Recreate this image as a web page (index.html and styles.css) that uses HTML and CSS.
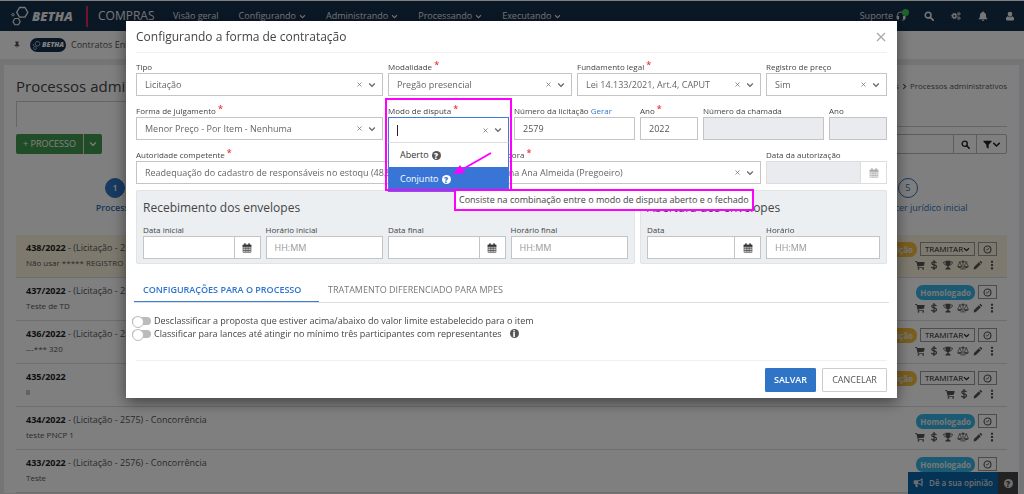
FILE: index.html
```html
<!DOCTYPE html>
<html lang="pt-BR">
<head>
<meta charset="utf-8">
<meta name="viewport" content="width=device-width, initial-scale=1">
<title>Compras - Processos administrativos</title>
<link rel="stylesheet" href="styles.css">
</head>
<body>
<svg class="sprite" aria-hidden="true">
  <symbol id="i-down" viewBox="0 0 10 10"><path d="M1.5 3.2 5 6.7 8.5 3.2" fill="none" stroke="currentColor" stroke-width="1.6"/></symbol>
  <symbol id="i-x" viewBox="0 0 10 10"><path d="M1 1 9 9M9 1 1 9" fill="none" stroke="currentColor" stroke-width="1.4"/></symbol>
  <symbol id="i-search" viewBox="0 0 16 16"><circle cx="6.6" cy="6.6" r="4.6" fill="none" stroke="currentColor" stroke-width="2.4"/><path d="m10 10 4.6 4.6" stroke="currentColor" stroke-width="2.8" stroke-linecap="round"/></symbol>
  <symbol id="i-gears" viewBox="0 0 18 16"><g fill="none" stroke="currentColor"><circle cx="6" cy="8" r="3.1" stroke-width="2.4"/><circle cx="6" cy="8" r="5" stroke-width="1.8" stroke-dasharray="2 1.93"/><circle cx="14" cy="4" r="1.7" stroke-width="1.5"/><circle cx="14" cy="4" r="2.9" stroke-width="1.2" stroke-dasharray="1.5 1.53"/><circle cx="14" cy="12" r="1.7" stroke-width="1.5"/><circle cx="14" cy="12" r="2.9" stroke-width="1.2" stroke-dasharray="1.5 1.53"/></g></symbol>
  <symbol id="i-bell" viewBox="0 0 16 16"><path fill="currentColor" d="M8 .5c.7 0 1.100.5 1.100 1.100v.5C11.500 2.600 12.800 4.500 12.800 7c0 3 .9 4.300 2.200 5.500v.8H1v-.8C2.300 11.300 3.200 10 3.200 7c0-2.500 1.300-4.400 3.700-4.900v-.5C6.900 1 7.300.5 8 .5zM6 14h4c0 1-.9 1.800-2 1.800S6 15 6 14z"/></symbol>
  <symbol id="i-user" viewBox="0 0 16 16"><path fill="currentColor" d="M8 1a3.700 3.700 0 0 1 3.700 3.800C11.700 7 10.100 9 8 9S4.300 7 4.300 4.800A3.700 3.700 0 0 1 8 1zM4.500 8.200C5.400 9.300 6.600 10 8 10s2.600-.7 3.500-1.800c2.300.4 3 2.800 3 5 0 1.100-.8 1.800-1.900 1.800H3.400c-1.100 0-1.900-.7-1.900-1.800 0-2.200.7-4.600 3-5z"/></symbol>
  <symbol id="i-headset" viewBox="0 0 16 16"><path d="M2 9V7.500a6 6 0 0 1 12 0V12c0 1.800-1.300 2.600-4 2.600" fill="none" stroke="currentColor" stroke-width="1.400"/><path fill="currentColor" d="M1 8h3.700v5.500H3A2 2 0 0 1 1 11.500zM15 8h-3.700v5.500H13a2 2 0 0 0 2-2z"/></symbol>
  <symbol id="i-pin" viewBox="0 0 12 16"><path fill="currentColor" d="M2.500 1h7v2h-1v4C10 7.700 11 9 11 10.500H6.700L6 15.500l-.7-5H1C1 9 2 7.700 3.500 7V3h-1z"/></symbol>
  <symbol id="i-filter" viewBox="0 0 12 12"><path fill="currentColor" d="M.5 1h11v1L7.500 6.300v5.200l-3-2V6.300L.5 2z"/></symbol>
  <symbol id="i-cart" viewBox="0 0 16 16"><path fill="currentColor" d="M0 1.500h3.200L3.700 3H15.500L14.300 9 5.500 10l.2 1.100h8.600v1.300H4.500L2.200 2.900H0z"/><circle cx="5.600" cy="14" r="1.400" fill="currentColor"/><circle cx="13" cy="14" r="1.400" fill="currentColor"/></symbol>
  <symbol id="i-dollar" viewBox="0 0 16 16"><path d="M12 4.800C11 3.500 9.700 3 8 3 5.900 3 4.500 4 4.500 5.500 4.500 9 12 6.800 12 10.600 12 12.200 10.300 13 8 13c-1.900 0-3.300-.6-4.300-2M8 0v16" fill="none" stroke="currentColor" stroke-width="1.900"/></symbol>
  <symbol id="i-trophy" viewBox="0 0 16 16"><path fill="currentColor" d="M4 1h8v2c0 4-1 6-3 7v2c1.500 0 3 .8 3 2.500v.5H4v-.5C4 12.800 5.500 12 7 12v-2C5 9 4 7 4 3z"/><path d="M4 3.200H1c0 3 1.500 4.800 4.500 5M12 3.200h3c0 3-1.500 4.800-4.500 5" fill="none" stroke="currentColor" stroke-width="1.300"/></symbol>
  <symbol id="i-scale" viewBox="0 0 20 16"><g fill="none" stroke="currentColor" stroke-width="1.200"><path d="M10 1v13M3 2.800h14M5.500 14.500h9M4.500 3 1.300 10M4.500 3l3.200 7M15.500 3l-3.200 7M15.500 3l3.200 7"/></g><path fill="currentColor" d="M.5 10h8c0 1.800-1.600 2.800-4 2.800S.5 11.800.5 10zM11.500 10h8c0 1.800-1.600 2.800-4 2.800s-4-1-4-2.800z"/><circle cx="10" cy="2.200" r="1.500" fill="currentColor"/></symbol>
  <symbol id="i-pencil" viewBox="0 0 16 16"><path fill="currentColor" d="m11.900 1 3.100 3.100-1.700 1.700-3.100-3.100zM9.400 3.500l3.100 3.100-7.800 7.800L1 15l.6-3.700z"/></symbol>
  <symbol id="i-dots" viewBox="0 0 16 16"><path fill="currentColor" d="M6.300 1h3.400v3.400H6.300zM6.300 6.300h3.400v3.400H6.300zM6.300 11.600h3.400V15H6.300z"/></symbol>
  <symbol id="i-clock" viewBox="0 0 12 12"><circle cx="6" cy="6" r="4.600" fill="none" stroke="currentColor" stroke-width="1.500"/><path d="M8 3.800 6.300 6.400H4" fill="none" stroke="currentColor" stroke-width="1.100"/></symbol>
  <symbol id="i-cal" viewBox="0 0 14 14"><path d="M1.500 3h11v10h-11zM1.500 5.500h11M4.500 5.500V13M7 5.500V13M9.500 5.500V13M1.500 8h11M1.500 10.500h11" fill="none" stroke="currentColor" stroke-width=".9"/><path fill="currentColor" d="M1 2.500h12v2.800H1zM3.200.5h1.900v3H3.200zM8.900.5h1.900v3H8.900z"/></symbol>
  <symbol id="i-horn" viewBox="0 0 16 14"><path d="M2.500 4h4.500c2.500 0 4.500-1.200 6-2.800v9.200C11.500 9 9.500 7.800 7 7.800" fill="none" stroke="currentColor" stroke-width="1.500"/><path fill="currentColor" d="M1 3.500h6.500v4.800H6c.2 1.800.9 2.800 1.600 4L4.500 13C3.700 11.500 3.200 10 3.300 8.300H1zM13 4.500a1.500 1.500 0 0 1 0 3z"/></symbol>
  <symbol id="i-hex" viewBox="0 0 18 20"><g fill="none" stroke="currentColor" stroke-linejoin="round"><path d="M8.500 1.500h5.500l2.800 4.800-2.800 4.800H8.500L5.700 6.300z" stroke-width="1.300"/><path d="M3.800 12.500h3.600l1.800 3.100-1.800 3.100H3.800L2 15.600z" stroke-width="1.100"/><circle cx="2" cy="8.700" r="1.200" stroke-width=".9"/></g></symbol>
</svg>

<div class="page">
  <header class="nav">
    <a class="brand" href="#"><svg class="brand-mark"><use href="#i-hex"/></svg><b>BETHA</b></a>
    <span class="product">COMPRAS</span>
    <nav class="menu">
      <a href="#">Visão geral</a>
      <a href="#">Configurando <svg class="caret"><use href="#i-down"/></svg></a>
      <a href="#">Administrando <svg class="caret"><use href="#i-down"/></svg></a>
      <a href="#">Processando <svg class="caret"><use href="#i-down"/></svg></a>
      <a href="#">Executando <svg class="caret"><use href="#i-down"/></svg></a>
    </nav>
    <div class="tools">
      <a class="support" href="#">Suporte <svg><use href="#i-headset"/></svg><i class="online"></i></a>
      <button aria-label="Pesquisar"><svg><use href="#i-search"/></svg></button>
      <button aria-label="Configurações"><svg><use href="#i-gears"/></svg></button>
      <button aria-label="Notificações"><svg><use href="#i-bell"/></svg></button>
      <button aria-label="Usuário"><svg><use href="#i-user"/></svg></button>
    </div>
  </header>
  <div class="context">
    <svg class="pin"><use href="#i-pin"/></svg>
    <span class="pill"><svg><use href="#i-hex"/></svg><b>BETHA</b></span>
    <span>Contratos Entidade</span>
  </div>

  <main class="panel">
    <div class="heading">
      <h1>Processos administrativos</h1>
      <div class="crumbs">Processos <svg><use href="#i-down"/></svg> Processos administrativos</div>
    </div>
    <div class="tabline"><div class="tabbox"></div></div>
    <div class="actions">
      <div class="split"><button>+ PROCESSO</button><button aria-label="Mais opções"><svg><use href="#i-down"/></svg></button></div>
      <div class="find"><input type="text" aria-label="Pesquisar processos"><button aria-label="Pesquisar"><svg><use href="#i-search"/></svg></button><button aria-label="Filtrar"><svg><use href="#i-filter"/></svg><svg><use href="#i-down"/></svg></button></div>
    </div>
    <ol class="steps">
      <li class="current"><i>1</i>Processo</li>
      <li><i>2</i></li>
      <li><i>3</i></li>
      <li><i>4</i></li>
      <li><i>5</i>Emitir parecer jurídico inicial</li>
    </ol>
    <ul class="rows">
      <li class="picked">
        <div><p><b>438/2022</b> - (Licitação - 2579)</p><small>Não usar ***** REGISTRO</small></div>
        <div class="side">
          <div class="state"><span class="tag amber">Em edição</span><button class="flow">TRAMITAR<svg><use href="#i-down"/></svg></button><button class="clock" aria-label="Histórico"><svg><use href="#i-clock"/></svg></button></div>
          <div class="icons"><svg><use href="#i-cart"/></svg><svg><use href="#i-dollar"/></svg><svg><use href="#i-trophy"/></svg><svg class="wide"><use href="#i-scale"/></svg><svg><use href="#i-pencil"/></svg><svg><use href="#i-dots"/></svg></div>
        </div>
      </li>
      <li>
        <div><p><b>437/2022</b> - (Licitação - 2578)</p><small>Teste de TD</small></div>
        <div class="side">
          <div class="state"><span class="tag blue">Homologado</span><button class="clock" aria-label="Histórico"><svg><use href="#i-clock"/></svg></button></div>
          <div class="icons"><svg><use href="#i-cart"/></svg><svg><use href="#i-dollar"/></svg><svg><use href="#i-trophy"/></svg><svg class="wide"><use href="#i-scale"/></svg><svg><use href="#i-pencil"/></svg><svg><use href="#i-dots"/></svg></div>
        </div>
      </li>
      <li>
        <div><p><b>436/2022</b> - (Licitação - 2577)</p><small>---*** 320</small></div>
        <div class="side">
          <div class="state"><span class="tag amber">Em edição</span><button class="flow">TRAMITAR<svg><use href="#i-down"/></svg></button><button class="clock" aria-label="Histórico"><svg><use href="#i-clock"/></svg></button></div>
          <div class="icons"><svg><use href="#i-cart"/></svg><svg><use href="#i-dollar"/></svg><svg><use href="#i-trophy"/></svg><svg class="wide"><use href="#i-scale"/></svg><svg><use href="#i-pencil"/></svg><svg><use href="#i-dots"/></svg></div>
        </div>
      </li>
      <li>
        <div><p><b>435/2022</b></p><small>ll</small></div>
        <div class="side">
          <div class="state"><span class="tag amber">Em edição</span><button class="flow">TRAMITAR<svg><use href="#i-down"/></svg></button><button class="clock" aria-label="Histórico"><svg><use href="#i-clock"/></svg></button></div>
          <div class="icons"><svg><use href="#i-cart"/></svg><svg><use href="#i-dollar"/></svg><svg><use href="#i-pencil"/></svg><svg><use href="#i-dots"/></svg></div>
        </div>
      </li>
      <li>
        <div><p><b>434/2022</b> - (Licitação - 2575) - Concorrência</p><small>teste PNCP 1</small></div>
        <div class="side">
          <div class="state"><span class="tag blue">Homologado</span><button class="clock" aria-label="Histórico"><svg><use href="#i-clock"/></svg></button></div>
          <div class="icons"><svg><use href="#i-cart"/></svg><svg><use href="#i-dollar"/></svg><svg><use href="#i-trophy"/></svg><svg class="wide"><use href="#i-scale"/></svg><svg><use href="#i-pencil"/></svg><svg><use href="#i-dots"/></svg></div>
        </div>
      </li>
      <li>
        <div><p><b>433/2022</b> - (Licitação - 2576) - Concorrência</p><small>Teste</small></div>
        <div class="side">
          <div class="state"><span class="tag blue">Homologado</span><button class="clock" aria-label="Histórico"><svg><use href="#i-clock"/></svg></button></div>
        </div>
      </li>
    </ul>
  </main>
  <div class="feedback"><button><svg><use href="#i-horn"/></svg>Dê a sua opinião</button><button aria-label="Ajuda"><i class="dot">?</i></button></div>
</div>

<div class="overlay">
  <form class="modal" role="dialog" aria-labelledby="dlg-title">
    <div class="modal-head"><h2 id="dlg-title">Configurando a forma de contratação</h2><button type="button" class="close" aria-label="Fechar"><svg><use href="#i-x"/></svg></button></div>

    <div class="grid">
      <div class="field s4"><label for="tipo">Tipo</label><div class="combo"><input id="tipo" value="Licitação"><svg class="x"><use href="#i-x"/></svg><svg><use href="#i-down"/></svg></div></div>
      <div class="field s3"><label for="modalidade">Modalidade <em>*</em></label><div class="combo"><input id="modalidade" value="Pregão presencial"><svg class="x"><use href="#i-x"/></svg><svg><use href="#i-down"/></svg></div></div>
      <div class="field s3"><label for="fundamento">Fundamento legal <em>*</em></label><div class="combo"><input id="fundamento" value="Lei 14.133/2021, Art.4, CAPUT"><svg class="x"><use href="#i-x"/></svg><svg><use href="#i-down"/></svg></div></div>
      <div class="field s2"><label for="registro">Registro de preço</label><div class="combo"><input id="registro" value="Sim"><svg class="x"><use href="#i-x"/></svg><svg><use href="#i-down"/></svg></div></div>

      <div class="field s4"><label for="forma">Forma de julgamento <em>*</em></label><div class="combo"><input id="forma" value="Menor Preço - Por Item - Nenhuma"><svg class="x"><use href="#i-x"/></svg><svg><use href="#i-down"/></svg></div></div>
      <div class="field s2 open">
        <label for="modo">Modo de disputa <em>*</em></label>
        <div class="combo"><i class="cursor"></i><input id="modo" value=""><svg class="x"><use href="#i-x"/></svg><svg><use href="#i-down"/></svg></div>
        <ul class="options" role="listbox" aria-label="Modo de disputa">
          <li role="option">Aberto <i class="dot">?</i></li>
          <li role="option" class="on" aria-selected="true">Conjunto <i class="dot">?</i></li>
        </ul>
        <div class="marker"></div>
        <svg class="arrow" viewBox="0 0 40 24"><path d="M39 1 11 17" stroke="#ff00ff" stroke-width="2" fill="none"/><path d="M1 22 8 13l5 8z" fill="#ff00ff"/></svg>
        <div class="tip" role="tooltip">Consiste na combinação entre o modo de disputa aberto e o fechado</div>
      </div>
      <div class="field s2"><label for="numero">Número da licitação <a href="#">Gerar</a></label><input class="box" id="numero" value="2579"></div>
      <div class="field s1"><label for="ano">Ano <em>*</em></label><input class="box" id="ano" value="2022"></div>
      <div class="field s2"><label for="chamada">Número da chamada</label><input class="box" id="chamada" disabled></div>
      <div class="field s1"><label for="ano2">Ano</label><input class="box" id="ano2" disabled></div>

      <div class="field s5"><label for="autoridade">Autoridade competente <em>*</em></label><div class="combo"><input id="autoridade" value="Readequação do cadastro de responsáveis no estoqu (482.2"><svg class="x"><use href="#i-x"/></svg><svg><use href="#i-down"/></svg></div></div>
      <div class="field s5"><label for="comissao">Comissão julgadora <em>*</em></label><div class="combo"><input id="comissao" value="Comissão Ana Ana Almeida (Pregoeiro)"><svg class="x"><use href="#i-x"/></svg><svg><use href="#i-down"/></svg></div></div>
      <div class="field s2"><label for="autorizacao">Data da autorização</label><div class="date off"><input id="autorizacao" disabled><button type="button" disabled aria-label="Abrir calendário"><svg><use href="#i-cal"/></svg></button></div></div>
    </div>

    <div class="groups">
      <fieldset class="two">
        <h3>Recebimento dos envelopes</h3>
        <div class="field"><label for="di">Data inicial</label><div class="date"><input id="di"><button type="button" aria-label="Abrir calendário"><svg><use href="#i-cal"/></svg></button></div></div>
        <div class="field"><label for="hi">Horário inicial</label><input class="box" id="hi" placeholder="HH:MM"></div>
        <div class="field"><label for="df">Data final</label><div class="date"><input id="df"><button type="button" aria-label="Abrir calendário"><svg><use href="#i-cal"/></svg></button></div></div>
        <div class="field"><label for="hf">Horário final</label><input class="box" id="hf" placeholder="HH:MM"></div>
      </fieldset>
      <fieldset>
        <h3>Abertura dos envelopes</h3>
        <div class="field"><label for="da">Data</label><div class="date"><input id="da"><button type="button" aria-label="Abrir calendário"><svg><use href="#i-cal"/></svg></button></div></div>
        <div class="field"><label for="ha">Horário</label><input class="box" id="ha" placeholder="HH:MM"></div>
      </fieldset>
    </div>

    <div class="tabs" role="tablist">
      <button type="button" role="tab" aria-selected="true" class="on">CONFIGURAÇÕES PARA O PROCESSO</button>
      <button type="button" role="tab" aria-selected="false">TRATAMENTO DIFERENCIADO PARA MPES</button>
    </div>
    <div class="switches">
      <label><input type="checkbox">Desclassificar a proposta que estiver acima/abaixo do valor limite estabelecido para o item</label>
      <label><input type="checkbox">Classificar para lances até atingir no mínimo três participantes com representantes <i class="dot info">i</i></label>
    </div>
    <div class="modal-foot"><button type="button" class="primary">SALVAR</button><button type="button">CANCELAR</button></div>
  </form>
</div>
</body>
</html>
```

FILE: styles.css
```css
* { box-sizing: border-box; }
html, body { height: 100%; }
body {
  margin: 0;
  font: 9px/12px "Open Sans", "Noto Sans", sans-serif;
  color: #555;
  background: #e6ebee;
}
button, input { font: inherit; color: inherit; border-radius: 0; }
button { padding: 0; border: 0; background: none; }
a { color: inherit; text-decoration: none; }
h1, h2, h3, p, ul, ol { margin: 0; padding: 0; font-weight: 400; list-style: none; }
i, em { font-style: normal; }
svg { display: block; flex: none; }
.sprite { position: absolute; width: 0; height: 0; }

/* Top bar */
.nav {
  display: flex;
  align-items: center;
  height: 31px;
  padding: 0 9px 0 11px;
  border-top: 1px solid #fff;
  background: #15304d;
  color: #eee;
}
.brand { display: flex; align-items: center; width: 77px; height: 21px; border-right: 2px solid #e0284f; }
.brand-mark { width: 18px; height: 20px; }
.brand b, .pill b { font-style: italic; font-weight: 800; }
.brand b { margin-left: 3px; font-size: 13px; }
.product { width: 75px; padding-left: 10px; font-size: 12px; }
.menu { display: flex; gap: 20px; padding-left: 10px; }
.menu a { display: flex; align-items: center; gap: 3px; }
.caret { width: 7px; height: 7px; }
.tools { display: flex; align-items: center; gap: 17px; margin-left: auto; }
.tools svg { width: 10px; height: 10px; }
.tools button { width: 10px; }
.support { position: relative; display: flex; align-items: center; gap: 3px; margin-right: 1px; }
.online { position: absolute; right: -3px; top: -1px; width: 7px; height: 7px; border-radius: 50%; background: #3ec553; }
.context {
  display: flex;
  align-items: center;
  height: 28px;
  padding-left: 14px;
  background: #fff;
}
.pin { width: 6px; height: 8px; margin-right: 10px; }
.pill { display: flex; align-items: center; justify-content: center; gap: 1px; width: 36px; height: 14px; margin-right: 5px; border-radius: 7px; background: #15304d; color: #fff; font-size: 7px; }
.pill svg { width: 9px; height: 9px; }

/* Page panel */
.panel { margin: 6px 5px 0 4px; padding: 12px 12px 0; background: #fff; }
.heading { display: flex; align-items: center; justify-content: space-between; height: 18px; }
h1 { font-size: 15px; line-height: 18px; color: #444; }
.crumbs { display: flex; align-items: center; gap: 2px; font-size: 8px; }
.crumbs svg { width: 7px; height: 7px; transform: rotate(-90deg); }
.tabline { height: 26px; margin-top: 6px; border-bottom: 1px solid #ccc; }
.tabbox { width: 220px; height: 26px; border: 1px solid #ccc; border-bottom: 0; background: #fff; }
.actions { display: flex; justify-content: space-between; margin-top: 7px; }
.split { display: flex; height: 20px; border-radius: 2px; background: #419a4f; color: #fff; }
.split button:first-child { width: 68px; border-right: 1px solid #ddd; }
.split button:last-child { display: grid; place-items: center; width: 18px; }
.split svg { width: 8px; height: 8px; }
.find { display: flex; width: 340px; height: 20px; border: 1px solid #bbb; border-radius: 2px; color: #222; }
.find input { flex: 1; border: 0; background: none; }
.find button { display: flex; align-items: center; justify-content: center; width: 23px; border-left: 1px solid #bbb; }
.find button:last-child { width: 30px; }
.find svg { width: 9px; height: 9px; }
.steps { display: grid; grid-template-columns: repeat(5, 1fr); margin-top: 24px; text-align: center; color: #2f6fb8; }
.steps i { display: block; width: 20px; height: 20px; margin: 0 auto 4px; border: 1px solid #2f75c5; border-radius: 50%; line-height: 18px; }
.steps .current { font-weight: 600; }
.steps .current i { background: #2f75c5; color: #fff; }
.rows { margin-top: 21px; }
.rows li { display: flex; justify-content: space-between; height: 43px; padding: 7px 10px 0; border-bottom: 1px solid #ddd; }
.rows .picked { background: #fbf3dc; }
.rows b { color: #222; }
.rows small { display: block; margin-top: 3px; font-size: 8px; }
.side { display: flex; flex-direction: column; align-items: flex-end; gap: 3px; }
.state { display: flex; gap: 3px; }
.tag { padding: 0 4px; border-radius: 7px; font-weight: 700; font-size: 8px; line-height: 15px; color: #eee; }
.amber { background: #f5bc3e; }
.blue { background: #35b4e5; }
.flow { display: flex; align-items: center; justify-content: center; width: 55px; height: 14px; border: 1px solid #999; color: #222; font-size: 8px; }
.flow svg { width: 7px; height: 7px; }
.clock { display: grid; place-items: center; width: 19px; height: 14px; border: 1px solid #999; }
.clock svg { width: 9px; height: 9px; }
.icons { display: flex; align-items: center; gap: 4px; color: #555; }
.icons svg { width: 10px; height: 10px; }
.icons .wide { width: 12px; }
.feedback { position: fixed; right: 6px; bottom: 0; display: flex; height: 22px; color: #ddd; }
.feedback button { display: flex; align-items: center; justify-content: center; gap: 5px; width: 90px; background: #0b66ac; font-weight: 600; font-size: 8px; }
.feedback button:last-child { width: 20px; background: #444; }
.feedback svg { width: 11px; height: 10px; }
.feedback .dot { background: #ddd; color: #444; }

/* Dialog */
.overlay { position: fixed; inset: 0; padding: 21px 127px 0 126px; background: rgba(0, 0, 0, .5); }
.modal { padding: 0 10px 6px; background: #fff; box-shadow: 0 4px 14px rgba(0, 0, 0, .5); }
.modal-head { display: flex; align-items: center; justify-content: space-between; height: 32px; border-bottom: 1px solid #f0f0f0; }
h2 { font-size: 12px; color: #444; }
.close { padding: 0 1px; color: #aaa; }
.close svg { width: 10px; height: 10px; }
.grid { display: grid; grid-template-columns: repeat(12, 1fr); gap: 8px 5px; padding-top: 7px; }
.s1 { grid-column: span 1; }
.s2 { grid-column: span 2; }
.s3 { grid-column: span 3; }
.s4 { grid-column: span 4; }
.s5 { grid-column: span 5; }
.field { min-width: 0; }
.field label { display: block; height: 13px; line-height: 13px; font-size: 8px; white-space: nowrap; color: #444; }
.field em { color: #e33; font-size: 9px; font-weight: 600; line-height: 8px; vertical-align: 2px; }
.field a { color: #2f78d0; }
.combo, .date, .box { width: 100%; height: 23px; border: 1px solid #c4c4c4; background: #fff; }
.combo { display: flex; align-items: center; gap: 6px; padding-right: 6px; color: #666; }
.combo input { flex: 1; min-width: 0; height: 21px; padding: 0 0 0 8px; border: 0; background: none; }
.combo svg { width: 8px; height: 8px; }
.combo .x { width: 5px; height: 5px; }
.box { display: block; padding: 0 8px; }
.box:disabled { background: #e9ebef; }
.date { display: flex; }
.date input { flex: 1; min-width: 0; padding: 0 8px; border: 0; background: none; }
.date button { display: grid; place-items: center; width: 26px; border-left: 1px solid #c4c4c4; color: #333; }
.date svg { width: 10px; height: 10px; }
.off { background: #e9ebef; border-color: #ddd; }
.off button { background: #fff; border-color: #ddd; color: #aaa; }
::placeholder { color: #999; opacity: 1; }

.open { position: relative; z-index: 2; }
.open .combo { height: 26px; margin-bottom: -3px; border-color: #3b7dd8; border-bottom-color: #ddd; }
.open .cursor { width: 1px; height: 11px; margin-left: 8px; background: #222; }
.options { position: absolute; left: 0; right: 0; top: 39px; border: 1px solid #3b7dd8; border-top: 0; background: #fff; color: #333; }
.options li { display: flex; align-items: center; gap: 3px; height: 24px; padding-left: 11px; }
.options .on { background: #3875d7; color: #fff; }
.options .on .dot { background: #fff; color: #3875d7; }
.marker { position: absolute; left: -3px; right: -3px; top: -6px; height: 93px; border: 2px solid #ff00ff; }
.arrow { position: absolute; left: 64px; top: 48px; width: 40px; height: 24px; }
.tip { position: absolute; left: 66px; top: 85px; padding: 2px 3px; border: 2px solid #ff00ff; background: #fff; line-height: 14px; white-space: nowrap; color: #444; }
.dot { display: inline-grid; place-items: center; width: 9px; height: 9px; border-radius: 50%; background: #555; color: #fff; font-size: 8px; font-weight: 800; line-height: 9px; }
.info { margin-left: 8px; }

.groups { display: grid; grid-template-columns: 499fr 247fr; gap: 5px; margin-top: 6px; }
fieldset { display: grid; grid-template-columns: 1fr 1fr; gap: 0 5px; min-width: 0; margin: 0; padding: 9px 6px 4px; border: 1px solid #e0e4e6; border-radius: 2px; background: #ebeff1; }
fieldset.two { grid-template-columns: repeat(4, 1fr); }
h3 { grid-column: 1 / -1; height: 23px; font-size: 12px; line-height: 16px; color: #444; }
.tabs { display: flex; margin: 14px -2px 0; border-bottom: 1px solid #ddd; }
.tabs button { height: 24px; padding: 0 9px; text-align: left; color: #777; }
.tabs .on { min-width: 185px; border-bottom: 1px solid #3b7dd8; color: #2f75d0; font-weight: 600; }
.switches { padding-top: 11px; }
.switches label { display: flex; align-items: center; height: 13px; margin-left: -4px; color: #444; }
.switches input { appearance: none; position: relative; width: 19px; height: 8px; margin: 0 3px 0 0; border-radius: 4px; background: #bbb; }
.switches input::before { content: ""; position: absolute; left: 0; top: -1px; width: 10px; height: 10px; border: 1px solid #bbb; border-radius: 50%; background: #fff; }
.modal-foot { display: flex; justify-content: flex-end; gap: 6px; margin-top: 20px; padding-top: 7px; border-top: 1px solid #f0f0f0; }
.modal-foot button { height: 24px; width: 65px; border: 1px solid #ccc; border-radius: 1px; }
.modal-foot .primary { width: 51px; border-color: #3074c5; background: #3074c5; color: #fff; font-weight: 600; }
```
